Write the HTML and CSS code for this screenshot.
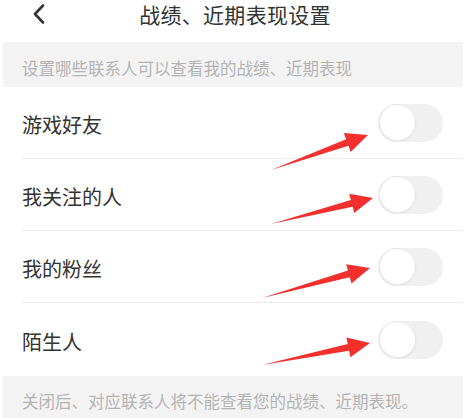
FILE: index.html
```html
<!DOCTYPE html>
<html lang="zh-CN">
<head>
<meta charset="utf-8">
<title>战绩、近期表现设置</title>
<link rel="stylesheet" href="styles.css">
</head>
<body>
<div class="page">
  <header class="header">
    <svg class="back" width="14" height="20" viewBox="0 0 14 20"><polyline points="11,1.5 3,10 11,18.5" fill="none" stroke="#333" stroke-width="2.6" stroke-linecap="round" stroke-linejoin="round"/></svg>
    <h1 class="title">战绩、近期表现设置</h1>
  </header>
  <div class="note note-top">设置哪些联系人可以查看我的战绩、近期表现</div>
  <ul class="list">
    <li class="row"><span class="label">游戏好友</span><span class="toggle"><span class="knob"></span></span></li>
    <li class="row"><span class="label">我关注的人</span><span class="toggle"><span class="knob"></span></span></li>
    <li class="row"><span class="label">我的粉丝</span><span class="toggle"><span class="knob"></span></span></li>
    <li class="row"><span class="label">陌生人</span><span class="toggle"><span class="knob"></span></span></li>
  </ul>
  <div class="note note-bottom">关闭后、对应联系人将不能查看您的战绩、近期表现。</div>
</div>
<svg class="arrows" width="468" height="418" viewBox="0 0 468 418">
  <g fill="#f3302d">
    <polygon points="271,170 348.5,145.8 350.7,151.9 368,135 343.9,133.1 346.1,139.2"/>
    <polygon points="271,224 352.6,206.8 354.2,213.1 373,198 349.2,193.7 350.8,200"/>
    <polygon points="262,298 349.7,277.3 351.5,283.5 370,268 346.1,264.3 347.9,270.5"/>
    <polygon points="262,365 349.1,350.8 350.4,357.2 370,343 346.4,337.6 347.7,344"/>
  </g>
</svg>
</body>
</html>
```
FILE: styles.css
```css
* { box-sizing: border-box; }
html, body { margin: 0; padding: 0; background: #fff; }
body {
  font-family: "Noto Sans CJK SC", "Noto Sans", sans-serif;
  width: 468px;
  height: 418px;
  overflow: hidden;
  position: relative;
}
.page {
  padding: 0 5px 0 3px;
}
.header {
  height: 42px;
  display: flex;
  align-items: flex-start;
  justify-content: center;
  position: relative;
}
.back {
  position: absolute;
  left: 29px;
  top: 4px;
}
.title {
  margin: 0;
  font-size: 21px;
  font-weight: normal;
  line-height: 28px;
  color: #333;
  letter-spacing: 0.3px;
  padding-left: 4px;
}
.note {
  background: #f3f3f3;
  color: #b3b3b3;
  font-size: 16.5px;
  padding-left: 19px;
  display: flex;
  align-items: center;
}
.note-top {
  height: 45px;
  padding-top: 6px;
}
.note-bottom {
  height: 43px;
  padding-top: 6px;
}
.list {
  list-style: none;
  margin: 0;
  padding: 0 0 0 19px;
}
.row {
  height: 72px;
  display: flex;
  align-items: center;
  justify-content: space-between;
  padding-right: 20px;
  border-bottom: 1px solid #ececec;
}
.row:last-child { border-bottom: none; height: 73px; }
.label {
  font-size: 20px;
  color: #333;
  padding-top: 4px;
}
.toggle {
  width: 65px;
  height: 38px;
  border-radius: 19px;
  background: #f0f0f0;
  display: flex;
  align-items: center;
  padding-left: 1px;
}
.knob {
  width: 37px;
  height: 37px;
  border-radius: 50%;
  background: #fff;
  border: 1px solid #e8e8e8;
  box-shadow: 0 1px 2px rgba(0,0,0,0.06);
}
.arrows {
  position: absolute;
  left: 0;
  top: 0;
  pointer-events: none;
}
```
